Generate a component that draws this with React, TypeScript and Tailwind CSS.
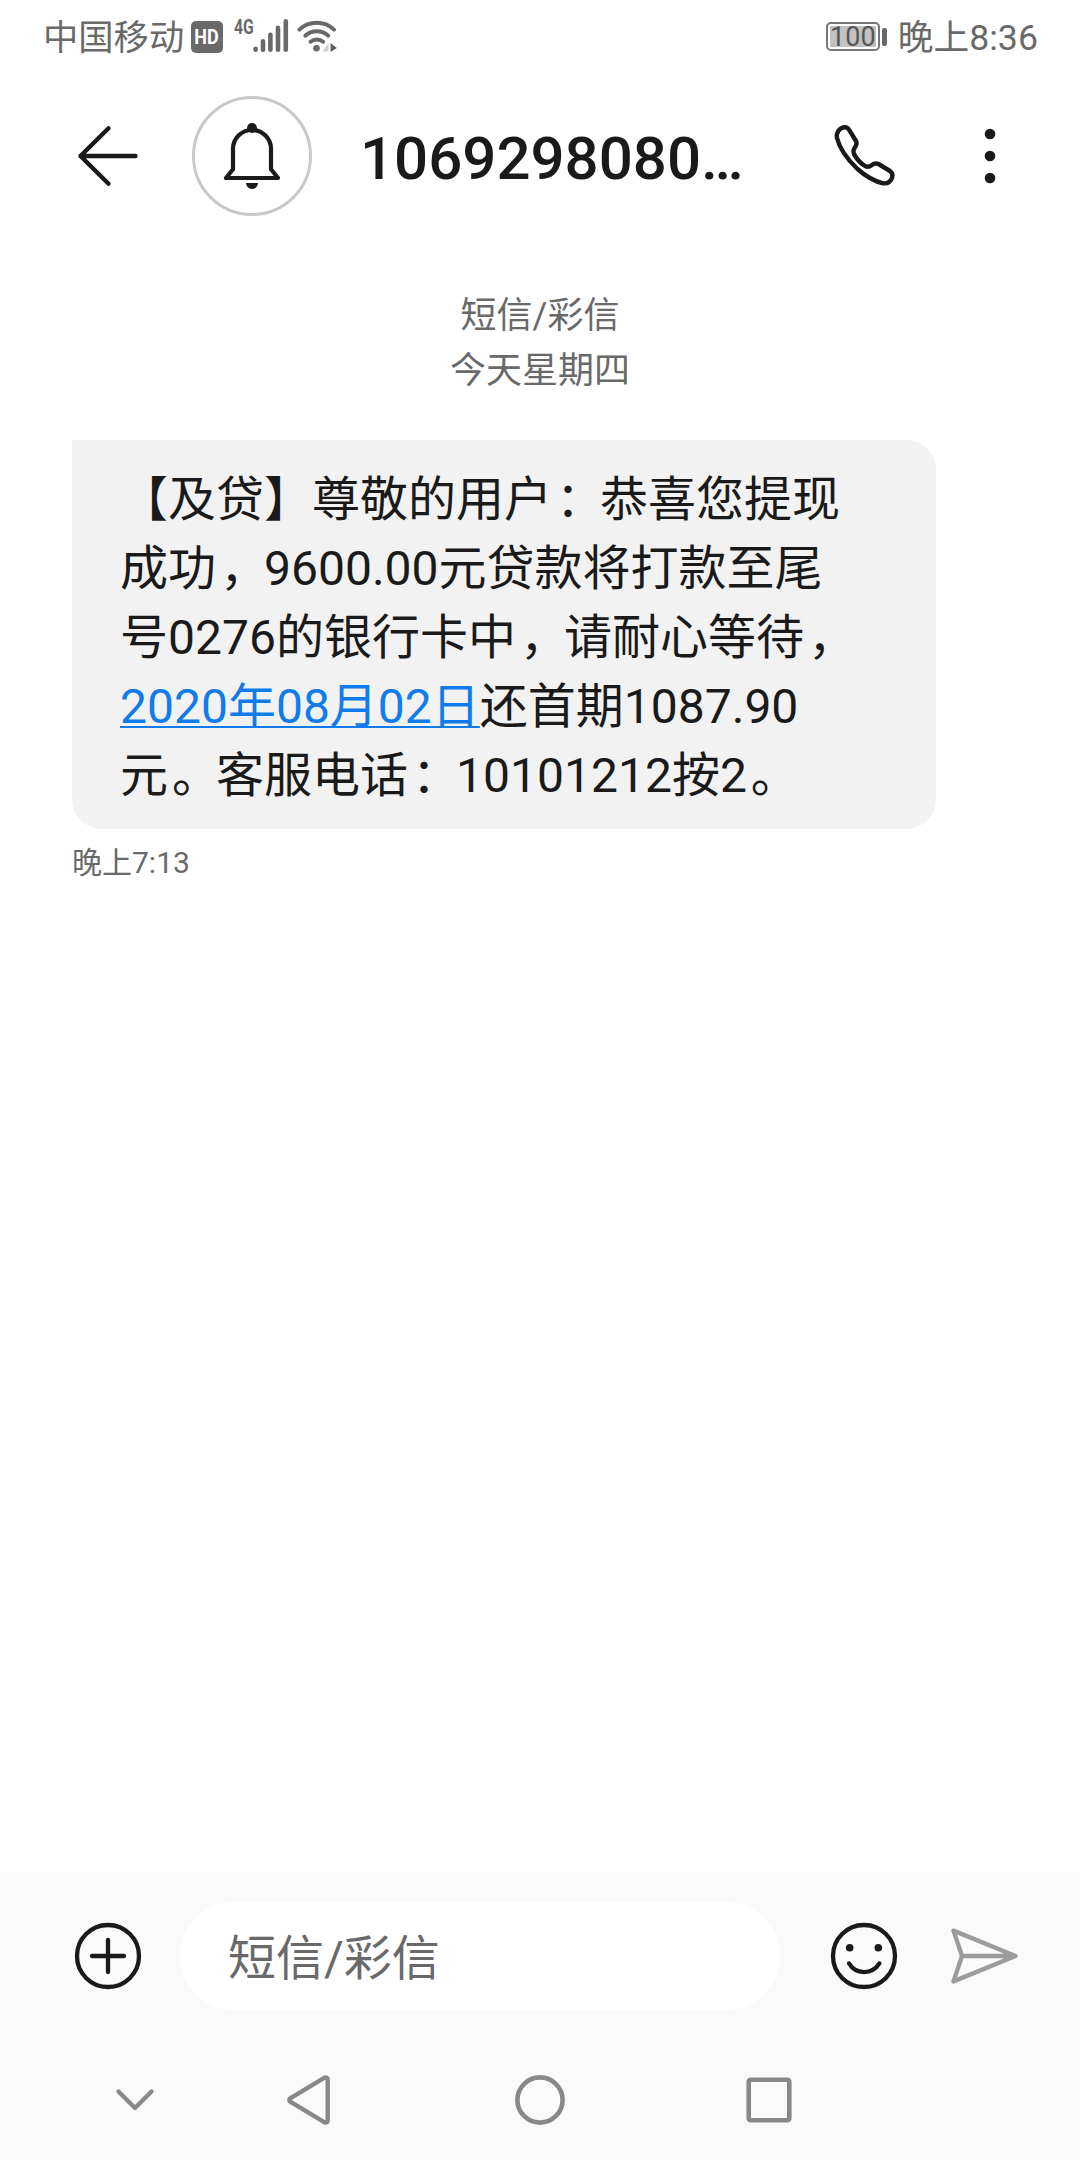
import type { ReactNode } from "react";

function SignalIcon() {
  return (
    <svg width="38" height="36" viewBox="0 0 38 36" stroke="#696969" strokeWidth="4.6" strokeLinecap="round">
      <path d="M4.6 30.7v1M12 23.3v8.4M19.4 16.7v15M27 9.8v21.9M34.8 3.4v28.3" />
    </svg>
  );
}

function WifiIcon() {
  return (
    <svg width="42" height="36" viewBox="0 0 42 36" fill="none" stroke="#696969" strokeWidth="3.9" strokeLinecap="round">
      <path d="M2.4 11.6C12 2.4 27.5 2.4 37 11.6" />
      <path d="M8.3 17.7c6.5-6 16.5-6 23 0" />
      <path d="M13.5 23.7c3.7-3 9-3 12.7 0" />
      <circle cx="19.5" cy="30.2" r="3.3" fill="#696969" stroke="none" />
      <path d="M31.500 25v8.500h-6z" fill="#d0d0d0" stroke="none" />
      <path d="M33.500 25l6.300 5-6.300 4z" fill="#5c5c5c" stroke="none" />
    </svg>
  );
}

function StatusBar() {
  return (
    <div className="flex h-[72px] items-start pl-[43px] pr-[42px] text-[#696969]">
      <span className="mt-[11px] w-[142px] whitespace-nowrap text-[35.3px] leading-[54px]">中国移动</span>
      <span className="ml-[6px] mt-[21px] flex h-8 w-8 items-center justify-center rounded-[5px] bg-[#696969] text-[20px] font-bold leading-8 text-white">
        <span className="scale-x-[0.9]">HD</span>
      </span>
      <span className="ml-[11px] mt-[16px] w-[16px] origin-left scale-x-[0.75] text-[21px] font-bold leading-[22px]">4G</span>
      <span className="ml-[1px] mt-[18px]">
        <SignalIcon />
      </span>
      <span className="ml-[8px] mt-[18px]">
        <WifiIcon />
      </span>
      <span className="ml-auto flex items-center pt-[22px]">
        <span className="flex h-[29px] w-[54px] rounded-[5px] border-2 border-[#777] p-[2px]">
          <span className="flex w-full items-center justify-center bg-[#c2c2c2] pt-[1px] text-[27px] leading-[20px] text-[#555]">100</span>
        </span>
        <span className="ml-[2px] h-[18px] w-[5px] rounded-[2px] bg-[#696969]" />
      </span>
      <span className="ml-[11px] mt-[10px] whitespace-nowrap text-[35.7px] leading-[56px]">晚上8:36</span>
    </div>
  );
}

function BackIcon() {
  return (
    <svg width="72" height="72" viewBox="0 0 72 72" fill="none" stroke="#1a1a1a" strokeWidth="4.4" strokeLinecap="round" strokeLinejoin="round">
      <path d="M36.5 8.3L8.5 36l28 27.7M8.500 36h55" />
    </svg>
  );
}

function BellAvatar() {
  return (
    <svg width="120" height="120" viewBox="0 0 120 120" fill="none">
      <circle cx="60" cy="60" r="58.5" stroke="#c9c9c9" strokeWidth="3" />
      <path
        d="M60 34c-10.6 0-19 8.4-19 19v20.3L34 82h52l-7-8.7V53c0-10.6-8.4-19-19-19z"
        stroke="#1a1a1a"
        strokeWidth="4.2"
        strokeLinejoin="round"
      />
      <circle cx="60" cy="32" r="5" fill="#1a1a1a" />
      <path d="M54 87h12a6 6 0 0 1-12 0z" fill="#1a1a1a" />
    </svg>
  );
}

function PhoneIcon() {
  return (
    <svg width="72" height="72" viewBox="0 0 72 72" fill="none" stroke="#1a1a1a" strokeWidth="4.4" strokeLinejoin="round">
      <path d="M14.3 7.3C16.5 7.1 18 8 19 9.7L26 21C27 23 26.8 24.3 25.6 26.2C23.2 29.8 22.8 31.5 24.5 35C27.5 40 31 43.5 35 46C37.5 47.2 39.5 46.8 41.5 45.2C44 43.2 45.8 42.8 48.5 44L60 51C62.5 52.6 63 54.5 62.2 57.5C60.8 61.5 57.5 63.8 53 63.3C45 61.5 36 56.5 27.5 49C17.5 39.5 9.5 28 7 18C6 12.5 9.5 8 14.3 7.3Z" />
    </svg>
  );
}

function Header() {
  return (
    <header className="flex h-[168px] items-center pl-[72px] pr-[78px] text-[#1a1a1a]">
      <BackIcon />
      <span className="ml-12">
        <BellAvatar />
      </span>
      <h1 className="ml-12 whitespace-nowrap pt-[5px] text-[60px] font-medium leading-[72px]">1069298080…</h1>
      <span className="ml-auto">
        <PhoneIcon />
      </span>
      <svg className="ml-[76px]" width="24" height="72" viewBox="0 0 24 72" fill="#1a1a1a">
        <circle cx="12" cy="14" r="5.3" />
        <circle cx="12" cy="36" r="5.3" />
        <circle cx="12" cy="58" r="5.3" />
      </svg>
    </header>
  );
}

/* Full-width punctuation set slightly right of its default place in the cell. */
function Punct({ children }: { children: ReactNode }) {
  return <span className="-mr-[4px] pl-[4px]">{children}</span>;
}

function Conversation() {
  return (
    <main className="flex flex-1 flex-col px-[72px] pt-[49px]">
      <div className="text-center text-[36px] leading-[55px] text-[#696969]">
        <p>短信/彩信</p>
        <p>今天星期四</p>
      </div>
      <div className="mt-[41px] h-[389px] w-[864px] whitespace-nowrap rounded-[30px] rounded-tl-none bg-[#f2f2f2] pl-12 pt-[25px] text-[48px] leading-[69px] text-[#1a1a1a] [text-spacing-trim:space-all]">
        <p>【及贷】尊敬的用户<Punct>：</Punct>恭喜您提现</p>
        <p>成功<Punct>，</Punct>9600.00元贷款将打款至尾</p>
        <p>号0276的银行卡中<Punct>，</Punct>请耐心等待<Punct>，</Punct></p>
        <p>
          <a className="text-[#107bea] underline decoration-2 underline-offset-[3px] [text-decoration-skip-ink:none]">2020年08月02日</a>
          还首期1087.90
        </p>
        <p>元<Punct>。</Punct>客服电话<Punct>：</Punct>10101212按2<Punct>。</Punct></p>
      </div>
      <time className="mt-[16px] text-[30px] leading-[36px] text-[#696969]">晚上7:13</time>
    </main>
  );
}

function Composer() {
  return (
    <div className="flex h-[168px] items-center pl-[72px] pr-[54px]">
      <svg width="72" height="72" viewBox="0 0 72 72" fill="none" stroke="#1a1a1a" strokeWidth="4.3" strokeLinecap="round">
        <circle cx="36" cy="36" r="31" />
        <path d="M20 36h32M36 20v32" />
      </svg>
      <div className="ml-9 h-[108px] w-[600px] rounded-full bg-white pl-12 pt-[7px] text-[48px] leading-[100px] text-[#696969]">短信/彩信</div>
      <svg className="ml-12" width="72" height="72" viewBox="0 0 72 72" fill="none" stroke="#1a1a1a" strokeWidth="4.3" strokeLinecap="round">
        <circle cx="36" cy="36" r="31" />
        <path d="M21 43.4c7 11.5 23 11.5 30.4 0" />
        <circle cx="21.7" cy="27.7" r="3.8" fill="#1a1a1a" stroke="none" />
        <circle cx="50.3" cy="27.7" r="3.8" fill="#1a1a1a" stroke="none" />
      </svg>
      <svg className="ml-12" width="72" height="72" viewBox="0 0 72 72" fill="none" stroke="#9c9c9c" strokeWidth="4.4" strokeLinecap="round" strokeLinejoin="round">
        <path d="M5.5 10.6L67.5 36l-62 25.4L14 36zM14 36h53.5" />
      </svg>
    </div>
  );
}

function NavBar() {
  return (
    <nav className="flex h-[120px] items-center pl-[99px]">
      <svg width="72" height="72" viewBox="0 0 72 72" fill="none" stroke="#888" strokeWidth="4.4" strokeLinecap="round" strokeLinejoin="round">
        <path d="M19.5 27.5L36 44l16.5-16.5" />
      </svg>
      <svg className="ml-[101px]" width="72" height="72" viewBox="0 0 72 72" fill="none" stroke="#888" strokeWidth="4.4" strokeLinejoin="round">
        <path d="M18.2 34.3L52.2 13.9Q55.7 12.500 55.7 15.7v40.6Q55.7 59.500 52.200 58.100L18.200 37.700Q16.600 36 18.200 34.300z" />
      </svg>
      <svg className="ml-[160px]" width="72" height="72" viewBox="0 0 72 72" fill="none" stroke="#888" strokeWidth="4.6">
        <circle cx="36" cy="36" r="22.6" />
      </svg>
      <svg className="ml-[157px]" width="72" height="72" viewBox="0 0 72 72" fill="none" stroke="#888" strokeWidth="4.6">
        <rect x="15.7" y="15.7" width="40.6" height="40.6" rx="2" />
      </svg>
    </nav>
  );
}

export default function App() {
  return (
    <div className="flex h-[2160px] w-[1080px] flex-col overflow-hidden bg-white font-['Roboto','Noto_Sans_CJK_SC',sans-serif]">
      <StatusBar />
      <Header />
      <Conversation />
      <footer className="flex h-[288px] flex-col bg-[#fafafa]">
        <Composer />
        <NavBar />
      </footer>
    </div>
  );
}
